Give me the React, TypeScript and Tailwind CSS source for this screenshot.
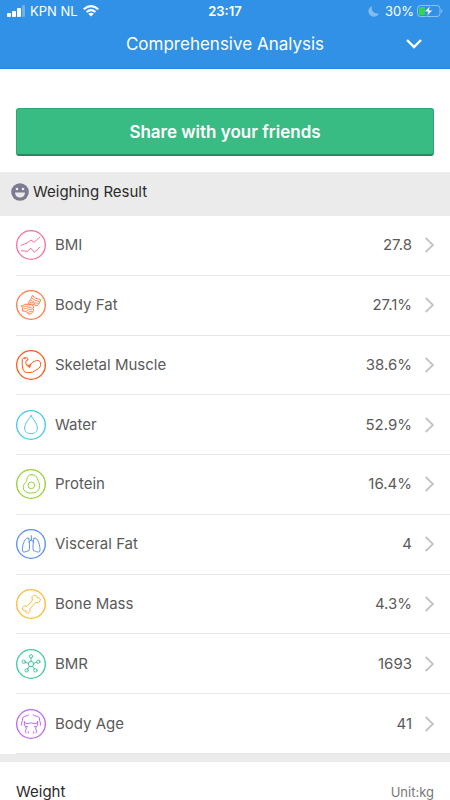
import type { ReactNode } from "react";

type Metric = {
  label: string;
  value: string;
  color: string;
  art: ReactNode;
};

const metrics: Metric[] = [
  {
    label: "BMI",
    value: "27.8",
    color: "text-[#f8709c]",
    art: (
      <>
        <path d="M16 46 33 39 45 30 54 37 72 21" />
        <path d="M16 62 35 64 44 54 55 67 72 51" />
      </>
    ),
  },
  {
    label: "Body Fat",
    value: "27.1%",
    color: "text-[#ff7d45]",
    art: (
      <>
        <path d="M49 17Q57 27 74 29Q72 40 63 48Q52 40 37 42Q36 37 40 34Q47 26 49 17Z" />
        <path d="M47 24Q56 33 70 35M44 30Q54 38 67 41M40 36Q49 36 57 41" strokeWidth="2.500" />
        <path d="M17 48Q29 40 38 43Q47 42 53 50Q50 55 53 62Q48 72 38 73Q35 64 19 63Q23 55 17 48Z" />
        <path d="M22 51Q34 46 43 48M24 57Q36 51 48 53M32 62Q40 56 48 58M37 67Q42 62 48 64" strokeWidth="2.500" />
      </>
    ),
  },
  {
    label: "Skeletal Muscle",
    value: "38.6%",
    color: "text-[#fb5a1e]",
    art: (
      <path d="M25 26Q32 19 36 26Q37 32 30 33Q27 40 34 48L41 52Q45 36 56 34Q68 26 74 39Q76 53 62 59Q50 70 35 68Q23 68 21 58Q17 42 19 28Q22 21 28 23M36 45 41 52 42 42" />
    ),
  },
  {
    label: "Water",
    value: "52.9%",
    color: "text-[#45c8e5]",
    art: <path d="M45 17C39 28 26 40 26 54C26 66 35 71 45 71S64 66 64 54C64 40 51 28 45 17Z" />,
  },
  {
    label: "Protein",
    value: "16.4%",
    color: "text-[#97d136]",
    art: (
      <>
        <path d="M48 17C37 16 33 24 32 35C30 42 22 43 22 56C22 67 34 73 47 72C62 72 71 65 71 49C70 39 65 34 64 29C62 21 57 18 48 17Z" />
        <circle cx="46" cy="49" r="10" />
      </>
    ),
  },
  {
    label: "Visceral Fat",
    value: "4",
    color: "text-[#5b8ff0]",
    art: (
      <>
        <path d="M38 28C30 21 19 43 19 63C19 74 31 67 39 65C42 58 41 38 38 28Z" />
        <path d="M54 28C62 21 72 43 72 63C72 74 61 67 52 65C50 58 51 38 54 28Z" />
        <path d="M46 20V34M46 32 39 40M46 32 53 40" />
      </>
    ),
  },
  {
    label: "Bone Mass",
    value: "4.3%",
    color: "text-[#fbbb38]",
    art: (
      <path d="M49 32C45 24 50 17 58 20C61 19 65 24 64 27C69 26 76 29 72 35C70 41 64 42 60 40L41 60C44 67 40 74 33 72C29 71 29 66 30 65C24 67 17 62 19 56C22 50 28 50 32 52Z" />
    ),
  },
  {
    label: "BMR",
    value: "1693",
    color: "text-[#3fcb9b]",
    art: (
      <>
        <circle cx="45" cy="45" r="8" />
        <circle cx="45" cy="22" r="5" />
        <circle cx="23" cy="38" r="5" />
        <circle cx="67" cy="38" r="5" />
        <circle cx="32" cy="64" r="5" />
        <circle cx="58" cy="64" r="5" />
        <path d="M45 27V37M28 40 37 43M62 40 53 43M35 60 40 52M55 60 50 52" />
      </>
    ),
  },
  {
    label: "Body Age",
    value: "41",
    color: "text-[#c069ee]",
    art: (
      <>
        <path d="M39 17Q37 21 26 22Q18 23 19 35Q15 42 17 49M51 17Q53 21 64 22Q72 23 71 35Q75 42 73 49" />
        <path d="M25 37V49L30 53Q32 60 28 67L30 72M65 37V49L60 53Q58 60 62 67L60 72" />
        <path d="M25 41Q33 47 43 42H47Q57 47 65 41M30 53H35M60 53H55M37 68V72M53 68V72" />
      </>
    ),
  },
];

function StatusBar() {
  return (
    <div className="grid h-[22px] grid-cols-3 items-center px-[7px] text-[13px] leading-4">
      <div className="flex items-center gap-[5px]">
        <svg className="h-3 w-[18px]" viewBox="0 0 18 12" fill="currentColor" aria-label="Signal">
          <rect x="0" y="8" width="4" height="4" rx="1" />
          <rect x="5" y="6" width="4" height="6" rx="1" />
          <rect x="10" y="3" width="4" height="9" rx="1" />
          <rect x="15" y="0" width="3" height="12" rx="1" opacity="0.3" />
        </svg>
        <span className="whitespace-nowrap">KPN NL</span>
        <svg className="h-3 w-4" viewBox="0 0 32 24" fill="none" stroke="currentColor" strokeWidth="4.2" aria-label="Wi-Fi">
          <path d="M1.500 8.500Q16-4 30.500 8.500M7 14Q16 6.500 25 14" />
          <path d="M10.500 17.500Q16 13 21.500 17.500L16 23Z" fill="currentColor" stroke="none" />
        </svg>
      </div>
      <span className="text-center font-semibold">23:17</span>
      <div className="flex items-center justify-end gap-[3px]">
        <svg className="mr-[3px] h-[11px] w-[11px] opacity-40" viewBox="0 0 11 11" fill="currentColor" aria-label="Do not disturb">
          <path d="M4 .2A5.400 5.400 0 1 0 10.900 7.200C6.500 8.500 2.700 4.700 4 .2Z" />
        </svg>
        <span>30%</span>
        <svg className="h-3 w-[26px]" viewBox="0 0 26 12" fill="none" aria-label="Battery charging">
          <rect x="0.500" y="0.500" width="22.500" height="11" rx="3" stroke="white" opacity="0.45" />
          <rect x="2" y="2" width="6" height="8" rx="1" fill="#32d74b" />
          <path d="M13.500 0.500 7.500 6.800H11.200L9.500 11.500 15.700 5.200H12Z" fill="white" stroke="#3091e6" strokeWidth="0.600" />
          <path d="M24.300 4Q26.300 6 24.300 8Z" fill="white" opacity="0.6" />
        </svg>
      </div>
    </div>
  );
}

function MetricRow({ label, value, color, art }: Metric) {
  return (
    <li className="ml-4 border-b border-[#e6e6e6]">
      <a href="#" className="flex h-full items-center pr-4 text-[#5a5a5a]">
        <svg
          className={`h-[30px] w-[30px] ${color}`}
          viewBox="0 0 90 90"
          fill="none"
          stroke="currentColor"
          strokeWidth="3"
          strokeLinejoin="round"
          strokeLinecap="round"
          aria-hidden="true"
        >
          <circle cx="45" cy="45" r="43" strokeWidth="4" />
          {art}
        </svg>
        <span className="ml-[9px] flex-1">{label}</span>
        <span>{value}</span>
        <svg className="ml-[13px] h-4 w-[9px]" viewBox="0 0 9 16" fill="none" stroke="#c3c3c3" strokeWidth="1.800" aria-hidden="true">
          <path d="M0.700 1 8 8 0.700 15" />
        </svg>
      </a>
    </li>
  );
}

export default function App() {
  return (
    <div className="min-h-screen bg-white font-['Inter','Liberation_Sans',sans-serif] text-[15px] leading-5 text-[#2b2b2b]">
      <header className="border-b border-[#2486e0] bg-[#3091e6] text-white">
        <StatusBar />
        <div className="grid h-[46px] grid-cols-[1fr_auto_1fr] items-center px-7 pb-[2px]">
          <h1 className="col-start-2 text-[17px] leading-5">Comprehensive Analysis</h1>
          <button type="button" aria-label="Show more" className="justify-self-end">
            <svg className="h-[10px] w-4" viewBox="0 0 16 10" fill="none" stroke="currentColor" strokeWidth="2.400">
              <path d="M1 1 8 8 15 1" />
            </svg>
          </button>
        </div>
      </header>

      <main>
        <div className="px-4 pt-[39px] pb-4">
          <button
            type="button"
            className="h-12 w-full rounded-[3px] border border-b-2 border-[#2fa672] border-b-[#218b5b] bg-[#39bc83] text-[17px] font-semibold text-white"
          >
            Share with your friends
          </button>
        </div>

        <section>
          <h2 className="flex h-11 items-center gap-1 bg-[#ebebeb] px-[11px] pb-1">
            <svg className="h-[18px] w-[18px]" viewBox="0 0 18 18" aria-hidden="true">
              <circle cx="9" cy="9" r="8.800" fill="#7d7b91" />
              <circle cx="6" cy="6" r="1.300" fill="#ebebeb" />
              <circle cx="12" cy="6" r="1.300" fill="#ebebeb" />
              <path d="M4 9.500H14Q13.500 14.500 9 14.500T4 9.500Z" fill="#ebebeb" />
            </svg>
            <span>Weighing Result</span>
          </h2>
          <ul className="grid min-h-[538px] auto-rows-fr">
            {metrics.map((metric) => (
              <MetricRow key={metric.label} {...metric} />
            ))}
          </ul>
        </section>

        <section className="border-t-8 border-[#ebebeb]">
          <div className="flex items-baseline justify-between px-4 pt-5">
            <h2>Weight</h2>
            <span className="text-[13px] text-[#777]">Unit:kg</span>
          </div>
        </section>
      </main>
    </div>
  );
}
